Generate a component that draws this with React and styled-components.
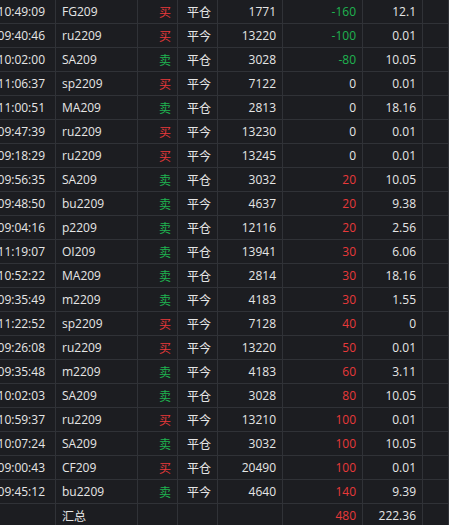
import React from 'react';
import styled, { createGlobalStyle } from 'styled-components';

const GlobalStyle = createGlobalStyle`
  html, body {
    margin: 0;
    padding: 0;
    background: #1c1d21;
    overflow: hidden;
  }
  body {
    font-family: "Open Sans", "Noto Sans CJK SC", sans-serif;
    font-size: 12px;
    color: #e6e6e6;
  }
`;

const COLS = '56px 82px 40px 40px 65px 80px 60px 1fr';

const Table = styled.div`
  width: 449px;
  height: 525px;
  overflow: hidden;
  background: #1c1d21;
`;

const Row = styled.div`
  display: grid;
  grid-template-columns: ${COLS};
  height: 24px;
  border-bottom: 1px solid #303237;
  box-sizing: border-box;
`;

const Cell = styled.div`
  box-sizing: border-box;
  border-right: 1px solid #303237;
  display: flex;
  align-items: center;
  justify-content: ${p => (p.$left ? 'flex-start' : 'flex-end')};
  padding: ${p => (p.$left ? '0 0 0 6px' : `0 ${p.$pr || 6}px 0 0`)};
  white-space: nowrap;
  overflow: visible;
  color: ${p => p.$color || '#e6e6e6'};
  line-height: 1;
`;

const Dir = styled.span`
  font-family: "Noto Sans CJK SC", sans-serif;
  color: ${p => (p.$buy ? '#e8393a' : '#1fb350')};
`;

const Han = styled.span`
  font-family: "Noto Sans CJK SC", sans-serif;
`;

const RED = '#e8393a';
const GREEN = '#1fb350';

const rows = [
  ['10:49:09', 'FG209', '买', '平仓', '1771', -160, '12.1'],
  ['09:40:46', 'ru2209', '买', '平今', '13220', -100, '0.01'],
  ['10:02:00', 'SA209', '卖', '平仓', '3028', -80, '10.05'],
  ['11:06:37', 'sp2209', '买', '平今', '7122', 0, '0.01'],
  ['11:00:51', 'MA209', '卖', '平仓', '2813', 0, '18.16'],
  ['09:47:39', 'ru2209', '买', '平今', '13230', 0, '0.01'],
  ['09:18:29', 'ru2209', '买', '平今', '13245', 0, '0.01'],
  ['09:56:35', 'SA209', '卖', '平仓', '3032', 20, '10.05'],
  ['09:48:50', 'bu2209', '卖', '平今', '4637', 20, '9.38'],
  ['09:04:16', 'p2209', '卖', '平仓', '12116', 20, '2.56'],
  ['11:19:07', 'OI209', '卖', '平仓', '13941', 30, '6.06'],
  ['10:52:22', 'MA209', '卖', '平仓', '2814', 30, '18.16'],
  ['09:35:49', 'm2209', '卖', '平今', '4183', 30, '1.55'],
  ['11:22:52', 'sp2209', '买', '平今', '7128', 40, '0'],
  ['09:26:08', 'ru2209', '买', '平今', '13220', 50, '0.01'],
  ['09:35:48', 'm2209', '卖', '平今', '4183', 60, '3.11'],
  ['10:02:03', 'SA209', '卖', '平仓', '3028', 80, '10.05'],
  ['10:59:37', 'ru2209', '买', '平今', '13210', 100, '0.01'],
  ['10:07:24', 'SA209', '卖', '平仓', '3032', 100, '10.05'],
  ['09:00:43', 'CF209', '买', '平仓', '20490', 100, '0.01'],
  ['09:45:12', 'bu2209', '卖', '平今', '4640', 140, '9.39'],
];

const profitColor = v => (v > 0 ? RED : v < 0 ? GREEN : undefined);

export default function App() {
  return (
    <>
      <GlobalStyle />
      <Table>
        {rows.map((r, i) => (
          <Row key={i}>
            <Cell $pr={10}>{r[0]}</Cell>
            <Cell $left>{r[1]}</Cell>
            <Cell><Dir $buy={r[2] === '买'}>{r[2]}</Dir></Cell>
            <Cell><Han>{r[3]}</Han></Cell>
            <Cell>{r[4]}</Cell>
            <Cell $color={profitColor(r[5])}>{r[5]}</Cell>
            <Cell>{r[6]}</Cell>
            <Cell />
          </Row>
        ))}
        <Row>
          <Cell />
          <Cell $left><Han>汇总</Han></Cell>
          <Cell />
          <Cell />
          <Cell />
          <Cell $color={RED}>480</Cell>
          <Cell>222.36</Cell>
          <Cell />
        </Row>
      </Table>
    </>
  );
}
